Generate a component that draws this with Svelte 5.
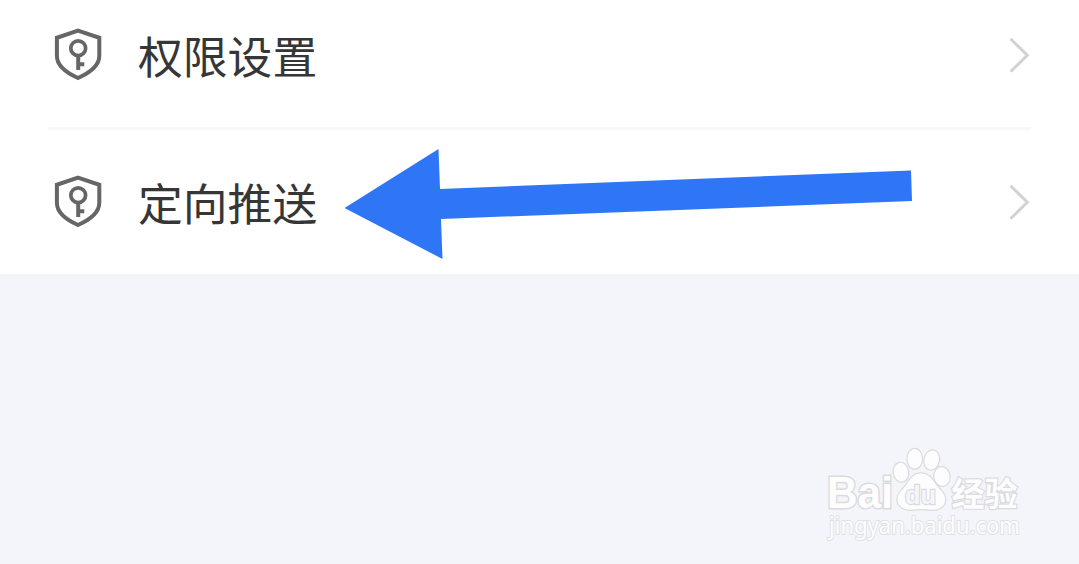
<script lang="ts">
	interface Item {
		id: string;
		label: string;
	}

	const items: Item[] = [
		{ id: 'permission', label: '权限设置' },
		{ id: 'push', label: '定向推送' },
	];
</script>

<main class="page">
	<section class="list">
		{#each items as item (item.id)}
			<div class="row">
				<svg class="row-icon" width="52" height="56" viewBox="0 0 52 56" fill="none" stroke="currentColor" stroke-width="4">
					<path d="M26 3.7 L47.3 10.8 V29 C47.3 40 36 46.5 26 51 C16 46.5 4.9 40 4.9 29 V10.8 Z" />
					<circle cx="26.2" cy="21.2" r="7.4" stroke-width="3.7" />
					<path d="M26.2 29 V43 M28 37.2 H32.3" />
				</svg>
				<span class="row-label">{item.label}</span>
				<svg class="row-arrow" width="24" height="40" viewBox="0 0 24 40" fill="none" stroke="currentColor" stroke-width="3" stroke-linecap="round">
					<path d="M4.5 4.7 L20.3 20.2 L4.5 35.7" />
				</svg>
			</div>
		{/each}
	</section>

	<svg class="pointer" width="570" height="114" viewBox="0 0 570 114">
		<path fill="#2f76f6" d="M1.5 61 L95.5 2 L97 42 L568 23.5 L569 54 L98 72 L99.5 112 Z" />
	</svg>

	<svg class="watermark" width="220" height="110" viewBox="0 0 220 110">
		<g class="outlined">
			<text class="latin" x="12" y="68" textLength="66" lengthAdjust="spacingAndGlyphs">Bai</text>
			<ellipse cx="86" cy="32.2" rx="7.2" ry="9.4" transform="rotate(-10 86 32.2)" />
			<ellipse cx="99.7" cy="18.8" rx="7.2" ry="9.8" />
			<ellipse cx="116.7" cy="20" rx="7.3" ry="9.6" transform="rotate(12 116.7 20)" />
			<ellipse cx="127" cy="36.5" rx="7.6" ry="9.3" transform="rotate(-8 127 36.5)" />
			<path d="M106 33.5 C114 33.5 118 40 122 46 C127 52 131 55 130 61 C129 68 122 70.5 114 69.5 C108 68.7 104 68.7 98 69.5 C90 70.5 83 67 82.5 60 C82 53 88 50 92 44 C96 38 99 33.5 106 33.5 Z" />
			<text class="du" x="90" y="63.5" textLength="31" lengthAdjust="spacingAndGlyphs">du</text>
			<text class="cjk" x="136.5" y="66" textLength="66">经验</text>
		</g>
		<text class="site" x="14" y="94" textLength="191" lengthAdjust="spacingAndGlyphs">jingyan.baidu.com</text>
	</svg>
</main>

<style>
	:global(body) {
		margin: 0;
		background: #f4f5fa;
	}

	.page {
		position: relative;
		height: 564px;
		overflow: hidden;
		background: #f4f5fa;
		font-family: 'Noto Sans CJK SC', sans-serif;
	}

	/* the list is scrolled slightly past the top edge */
	.list {
		margin-top: -17px;
		padding: 0 48px;
		background: #fff;
	}

	.row {
		display: flex;
		align-items: center;
		height: 144px;
		padding: 0 0 0 4px;
	}

	.row + .row {
		border-top: 3px solid #f7f8fa;
	}

	.row-icon {
		flex-shrink: 0;
		color: #666;
	}

	.row-label {
		margin-left: 34px;
		font-size: 44.8px;
		line-height: 60px;
		color: #363636;
	}

	.row-arrow {
		flex-shrink: 0;
		margin-left: auto;
		color: #d2d2d2;
	}

	.pointer {
		position: absolute;
		left: 343px;
		top: 147px;
	}

	.watermark {
		position: absolute;
		left: 815px;
		top: 440px;
	}

	.outlined {
		fill: #fdfdfe;
		stroke: #dadbde;
		stroke-width: 2.4;
		paint-order: stroke;
	}

	.latin {
		font: bold 44px 'Liberation Sans', sans-serif;
		stroke-width: 3;
	}

	.du {
		font: bold 26px 'Liberation Sans', sans-serif;
		fill: #f4f5fa;
	}

	.cjk {
		font: bold 33px 'Noto Sans CJK SC', sans-serif;
	}

	.site {
		font: 23.5px 'Noto Sans', sans-serif;
		fill: #fdfdfe;
		stroke: #e0e1e4;
		stroke-width: 2;
		paint-order: stroke;
	}
</style>
